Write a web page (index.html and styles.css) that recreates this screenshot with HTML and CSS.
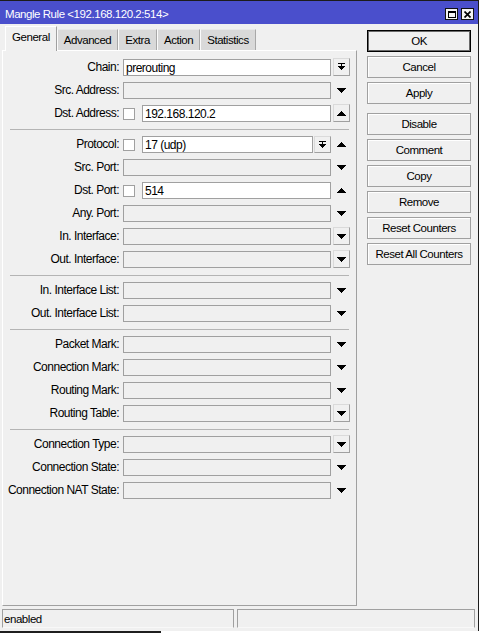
FILE: index.html
```html
<!DOCTYPE html>
<html lang="en">
<head>
    <meta charset="UTF-8">
    <meta name="viewport" content="width=device-width, initial-scale=1.0">
    <title>Mangle Rule</title>
    <link rel="stylesheet" href="styles.css">
</head>
<body>
    <svg class="defs" width="0" height="0">
        <symbol id="dn" viewBox="0 0 9 5"><path d="M0 0H9V1H8V2H7V3H6V4H5V5H4V4H3V3H2V2H1V1H0Z"/></symbol>
        <symbol id="up" viewBox="0 0 9 5"><path d="M4 0H5V1H6V2H7V3H8V4H9V5H0V4H1V3H2V2H3V1H4Z"/></symbol>
        <symbol id="combo" viewBox="0 0 7 8"><path d="M0 0H7V1H0Z M3 1H4V3H3Z M0 3H7V4H6V5H5V6H4V7H3V6H2V5H1V4H0Z"/></symbol>
    </svg>

    <div class="window">
        <div class="titlebar">
            <span class="title">Mangle Rule &lt;192.168.120.2:514&gt;</span>
            <span class="tbtn">
                <svg width="8" height="7" viewBox="0 0 8 7"><path fill-rule="evenodd" d="M0 0H8V7H0Z M1 2V6H7V2Z"/></svg>
            </span>
            <span class="tbtn">
                <svg width="7" height="7" viewBox="0 0 7 7"><path d="M0.5 0.5L6.5 6.5M6.5 0.5L0.5 6.5" stroke="#000" stroke-width="1.7"/></svg>
            </span>
        </div>

        <div class="client">
            <div class="main">
                <div class="tabs">
                    <span class="tab active">General</span>
                    <span class="tab">Advanced</span>
                    <span class="tab">Extra</span>
                    <span class="tab">Action</span>
                    <span class="tab">Statistics</span>
                </div>

                <div class="panel">
                    <div class="row">
                        <span class="lbl">Chain:</span>
                        <div class="field on">prerouting</div>
                        <span class="drop boxed"><svg width="7" height="8"><use href="#combo"/></svg></span>
                    </div>
                    <div class="row">
                        <span class="lbl">Src. Address:</span>
                        <div class="field"></div>
                        <span class="drop"><svg width="9" height="5"><use href="#dn"/></svg></span>
                    </div>
                    <div class="row">
                        <span class="lbl">Dst. Address:</span>
                        <span class="check"></span>
                        <div class="field on short">192.168.120.2</div>
                        <span class="drop boxed"><svg width="9" height="5"><use href="#up"/></svg></span>
                    </div>

                    <div class="sep"></div>

                    <div class="row">
                        <span class="lbl">Protocol:</span>
                        <span class="check"></span>
                        <div class="field on proto">17 (udp)</div>
                        <span class="combo-btn"><svg width="7" height="8"><use href="#combo"/></svg></span>
                        <span class="drop"><svg width="9" height="5"><use href="#up"/></svg></span>
                    </div>
                    <div class="row">
                        <span class="lbl">Src. Port:</span>
                        <div class="field"></div>
                        <span class="drop"><svg width="9" height="5"><use href="#dn"/></svg></span>
                    </div>
                    <div class="row">
                        <span class="lbl">Dst. Port:</span>
                        <span class="check"></span>
                        <div class="field on short">514</div>
                        <span class="drop"><svg width="9" height="5"><use href="#up"/></svg></span>
                    </div>
                    <div class="row">
                        <span class="lbl">Any. Port:</span>
                        <div class="field"></div>
                        <span class="drop"><svg width="9" height="5"><use href="#dn"/></svg></span>
                    </div>
                    <div class="row">
                        <span class="lbl">In. Interface:</span>
                        <div class="field"></div>
                        <span class="drop boxed"><svg width="9" height="5"><use href="#dn"/></svg></span>
                    </div>
                    <div class="row">
                        <span class="lbl">Out. Interface:</span>
                        <div class="field"></div>
                        <span class="drop boxed"><svg width="9" height="5"><use href="#dn"/></svg></span>
                    </div>

                    <div class="sep"></div>

                    <div class="row">
                        <span class="lbl">In. Interface List:</span>
                        <div class="field"></div>
                        <span class="drop"><svg width="9" height="5"><use href="#dn"/></svg></span>
                    </div>
                    <div class="row">
                        <span class="lbl">Out. Interface List:</span>
                        <div class="field"></div>
                        <span class="drop"><svg width="9" height="5"><use href="#dn"/></svg></span>
                    </div>

                    <div class="sep"></div>

                    <div class="row">
                        <span class="lbl">Packet Mark:</span>
                        <div class="field"></div>
                        <span class="drop"><svg width="9" height="5"><use href="#dn"/></svg></span>
                    </div>
                    <div class="row">
                        <span class="lbl">Connection Mark:</span>
                        <div class="field"></div>
                        <span class="drop"><svg width="9" height="5"><use href="#dn"/></svg></span>
                    </div>
                    <div class="row">
                        <span class="lbl">Routing Mark:</span>
                        <div class="field"></div>
                        <span class="drop"><svg width="9" height="5"><use href="#dn"/></svg></span>
                    </div>
                    <div class="row">
                        <span class="lbl">Routing Table:</span>
                        <div class="field"></div>
                        <span class="drop boxed"><svg width="9" height="5"><use href="#dn"/></svg></span>
                    </div>

                    <div class="sep"></div>

                    <div class="row">
                        <span class="lbl">Connection Type:</span>
                        <div class="field"></div>
                        <span class="drop boxed"><svg width="9" height="5"><use href="#dn"/></svg></span>
                    </div>
                    <div class="row">
                        <span class="lbl">Connection State:</span>
                        <div class="field"></div>
                        <span class="drop"><svg width="9" height="5"><use href="#dn"/></svg></span>
                    </div>
                    <div class="row">
                        <span class="lbl">Connection NAT State:</span>
                        <div class="field"></div>
                        <span class="drop"><svg width="9" height="5"><use href="#dn"/></svg></span>
                    </div>
                </div>
            </div>

            <div class="actions">
                <span class="btn default">OK</span>
                <span class="btn">Cancel</span>
                <span class="btn">Apply</span>
                <span class="btn spaced">Disable</span>
                <span class="btn">Comment</span>
                <span class="btn">Copy</span>
                <span class="btn">Remove</span>
                <span class="btn">Reset Counters</span>
                <span class="btn">Reset All Counters</span>
            </div>
        </div>

        <div class="status">
            <div class="cell wide">enabled</div>
            <div class="cell"></div>
        </div>
    </div>
    <div class="desk-edge"></div>
</body>
</html>
```

FILE: styles.css
```css
body {
    margin: 0;
    background: #fff;
    font-family: "Liberation Sans", Arial, sans-serif;
    font-size: 11.5px;
    letter-spacing: -0.45px;
    color: #000;
}
.defs {
    position: absolute;
}
.window {
    width: 478px;
    border-top: 1px solid #1c1c1c;
    border-right: 1px solid #1c1c1c;
    background: #f0f0f0;
    padding-bottom: 3px;
}

/* title bar */
.titlebar {
    height: 23px;
    box-sizing: border-box;
    background: #4a4fcc;
    color: #fff;
    display: flex;
    align-items: flex-start;
    padding: 6px 4px 0 5px;
    line-height: 15px;
}
.title {
    flex: 1;
    white-space: nowrap;
}
.tbtn {
    width: 13px;
    height: 12px;
    box-sizing: border-box;
    margin: 1px 0 0 3px;
    border: 1px solid #111;
    background: #f4f4f4;
    display: flex;
    align-items: center;
    justify-content: center;
}

/* body */
.client {
    display: flex;
    padding-top: 2px;
}
.main {
    width: 355px;
    margin-left: 2px;
}
.tabs {
    display: flex;
    align-items: flex-end;
    height: 24px;
    padding-left: 3px;
}
.tab {
    height: 21px;
    box-sizing: border-box;
    padding: 3px 6px 0;
    line-height: 15px;
    white-space: nowrap;
    background: #d9d9d9;
    border: 1px solid;
    border-bottom: none;
    border-color: #e8e8e8 #a8a8a8 transparent #fbfbfb;
}
.tab.active {
    height: 25px;
    margin-bottom: -1px;
    position: relative;
    z-index: 1;
    background: #f0f0f0;
    border-color: #fff #a0a0a0 transparent #fff;
}
.panel {
    height: 556px;
    box-sizing: border-box;
    border: 1px solid;
    border-color: #fff #a0a0a0 #a0a0a0 #fff;
    padding-top: 7px;
    display: flex;
    flex-direction: column;
    gap: 5px;
}
.row {
    display: flex;
    height: 18px;
    flex: none;
    font-size: 12px;
    letter-spacing: -0.5px;
}
.lbl {
    width: 116px;
    flex: none;
    text-align: right;
    line-height: 19px;
    white-space: nowrap;
}
.field {
    width: 208px;
    height: 17px;
    flex: none;
    box-sizing: border-box;
    margin-left: 4px;
    align-self: flex-end;
    border: 1px solid #a0a0a0;
    background: #f0f0f0;
    padding-left: 2px;
    line-height: 16px;
    white-space: nowrap;
    overflow: hidden;
}
.field.on {
    background: #fff;
}
.field.short {
    width: 189px;
    margin-left: 7px;
}
.field.proto {
    width: 171px;
    margin-left: 7px;
}
.check {
    width: 12px;
    height: 12px;
    flex: none;
    box-sizing: border-box;
    margin: 0 0 2px 4px;
    align-self: flex-end;
    border: 1px solid #a0a0a0;
    background: #fff;
}
.drop, .combo-btn {
    width: 17px;
    height: 18px;
    flex: none;
    box-sizing: border-box;
    margin-left: 2px;
    display: flex;
    align-items: center;
    justify-content: center;
}
.drop.boxed, .combo-btn {
    border: 1px solid;
    border-color: #dadada #a0a0a0 #a0a0a0 #dadada;
}
.combo-btn {
    height: 17px;
    margin-left: 1px;
    align-self: flex-end;
}
.sep {
    height: 1px;
    flex: none;
    margin: 2px 7px 0;
    background: #b4b4b4;
}

/* buttons on the right */
.actions {
    width: 104px;
    margin-left: 10px;
    padding-top: 4px;
    display: flex;
    flex-direction: column;
    gap: 4px;
}
.btn {
    height: 22px;
    box-sizing: border-box;
    border: 1px solid #a0a0a0;
    background: #f0f0f0;
    box-shadow: inset 1px 1px #fff;
    text-align: center;
    line-height: 21px;
    white-space: nowrap;
}
.btn.default {
    border-color: #000;
    box-shadow: inset 0 0 0 1px #6a6a6a;
}
.btn.spaced {
    margin-top: 5px;
}

/* status bar */
.status {
    display: flex;
    gap: 3px;
    margin-top: 3px;
    padding-left: 2px;
}
.cell {
    width: 238px;
    height: 19px;
    box-sizing: border-box;
    border: 1px solid;
    border-color: #a0a0a0 #a0a0a0 #f8f8f8 #a0a0a0;
    padding-left: 1px;
    line-height: 18px;
}
.cell.wide {
    width: 232px;
}
.desk-edge {
    width: 161px;
    height: 2px;
    background: #1e1e1e;
}
```
